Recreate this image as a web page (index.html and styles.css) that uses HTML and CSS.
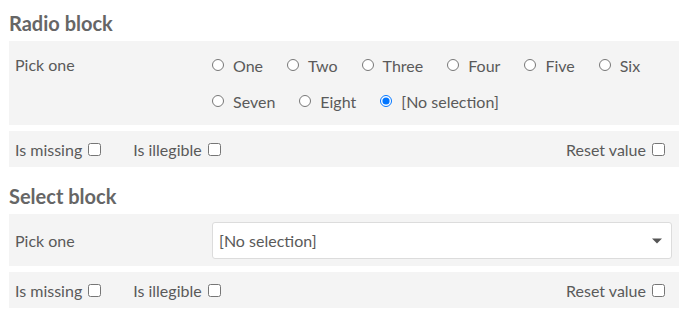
FILE: index.html
```html
<!DOCTYPE html>
<html>
<head>
<meta charset="utf-8">
<link rel="stylesheet" href="styles.css">
</head>
<body>
<div class="page">
  <section class="block">
    <h2 class="block-title">Radio block</h2>
    <div class="panel panel-radio">
      <div class="field-label">Pick one</div>
      <div class="options">
        <label class="opt"><input type="radio" name="r1"><span>One</span></label>
        <label class="opt"><input type="radio" name="r1"><span>Two</span></label>
        <label class="opt"><input type="radio" name="r1"><span>Three</span></label>
        <label class="opt"><input type="radio" name="r1"><span>Four</span></label>
        <label class="opt"><input type="radio" name="r1"><span>Five</span></label>
        <label class="opt"><input type="radio" name="r1"><span>Six</span></label>
        <label class="opt"><input type="radio" name="r1"><span>Seven</span></label>
        <label class="opt"><input type="radio" name="r1"><span>Eight</span></label>
        <label class="opt"><input type="radio" name="r1" checked><span>[No selection]</span></label>
      </div>
    </div>
    <div class="panel flags">
      <label class="flag">Is missing <input type="checkbox"></label>
      <label class="flag">Is illegible <input type="checkbox"></label>
      <label class="flag flag-reset">Reset value <input type="checkbox"></label>
    </div>
  </section>
  <section class="block block-next">
    <h2 class="block-title">Select block</h2>
    <div class="panel panel-select">
      <div class="field-label">Pick one</div>
      <div class="select">
        <span>[No selection]</span>
        <svg class="caret" width="10" height="6" viewBox="0 0 10 6"><path d="M0 0.5 H10 L5 5.5 Z" fill="#555"/></svg>
      </div>
    </div>
    <div class="panel flags">
      <label class="flag">Is missing <input type="checkbox"></label>
      <label class="flag">Is illegible <input type="checkbox"></label>
      <label class="flag flag-reset">Reset value <input type="checkbox"></label>
    </div>
  </section>
</div>
</body>
</html>
```
FILE: styles.css
```css
html, body {
  margin: 0;
  padding: 0;
  background: #fff;
}
body {
  font-family: Lato, "Liberation Sans", sans-serif;
  font-size: 16px;
  color: #5a5a5a;
}
.page {
  margin-left: 9px;
  width: 670px;
}
.block-next {
  margin-top: 6px;
}
.block-title {
  margin: 0;
  padding: 8px 0 3px 0;
  line-height: 30px;
  font-size: 20px;
  font-weight: 700;
  color: #666;
}
.panel {
  background: #f4f4f4;
  box-sizing: border-box;
}
.panel-radio {
  display: flex;
  padding: 6px 7px 6px 6px;
}
.field-label {
  width: 197px;
  flex: none;
  line-height: 36px;
}
.options {
  display: flex;
  flex-wrap: wrap;
  flex: 1;
}
.opt {
  display: flex;
  align-items: center;
  height: 36px;
  margin-right: 24px;
}
.opt input {
  margin: 0 9px 0 0;
  width: 12px;
  height: 12px;
}
.flags {
  display: flex;
  align-items: center;
  height: 36px;
  margin-top: 6px;
  padding: 0 14px 0 6px;
}
.flag {
  display: flex;
  align-items: center;
  margin-right: 32px;
}
.flag input {
  margin: 0 0 0 6px;
  width: 13px;
  height: 13px;
}
.flag-reset {
  margin-left: auto;
  margin-right: 0;
}
.panel-select {
  display: flex;
  align-items: center;
  padding: 8px 7px 7px 6px;
}
.select {
  flex: 1;
  height: 37px;
  box-sizing: border-box;
  background: #fff;
  border: 1px solid #dcdcdc;
  border-radius: 3px;
  display: flex;
  align-items: center;
  justify-content: space-between;
  padding: 0 9px 0 6px;
}
.caret {
  display: block;
}
```
